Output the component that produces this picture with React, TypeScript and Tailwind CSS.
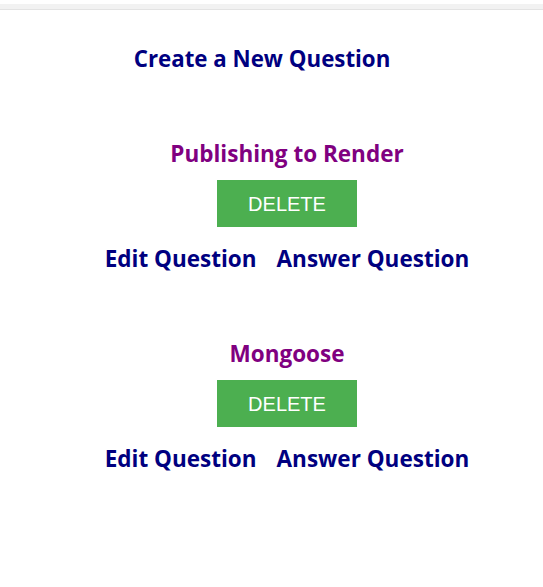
import React from "react";

const font = { fontFamily: '"Open Sans", "Noto Sans", sans-serif' };

function Item({ title }: { title: string }) {
  return (
    <div className="flex flex-col items-center">
      <h2 className="text-[22.5px] leading-[28px] font-bold text-[#800080]" style={font}>{title}</h2>
      <button className="mt-[12px] w-[140px] h-[47px] bg-[#4caf50] text-white text-[20px]" style={{ fontFamily: '"Liberation Sans", Arial, sans-serif' }}>
        DELETE
      </button>
      <div className="mt-[18px] flex gap-[20px] text-[22.5px] leading-[28px] font-bold text-[#000080]" style={font}>
        <span>Edit Question</span>
        <span>Answer Question</span>
      </div>
    </div>
  );
}

export default function App() {
  return (
    <div className="w-[543px] h-[587px] bg-white">
      <div className="pt-[4px]">
        <div className="h-[6px] bg-[#f2f2f2] border-b border-[#e3e3e3]" />
      </div>
      <div className="flex justify-center pr-[19px] mt-[35px]">
        <h1 className="text-[22.3px] leading-[28px] font-bold text-[#000080]" style={font}>Create a New Question</h1>
      </div>
      <div className="pl-[31px] mt-[67px] flex flex-col gap-[67px]">
        <Item title="Publishing to Render" />
        <Item title="Mongoose" />
      </div>
    </div>
  );
}
